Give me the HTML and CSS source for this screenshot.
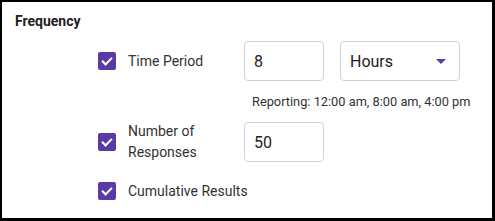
FILE: index.html
```html
<!DOCTYPE html>
<html>

<head>
    <meta charset="utf-8">
    <title>Frequency</title>
    <link rel="stylesheet" href="styles.css">
</head>

<body>
    <div class="panel">
        <h2 class="panel-title">Frequency</h2>

        <div class="options">
            <div class="option-row">
                <span class="check"></span>
                <span class="option-label">Time Period</span>
                <div class="field">8</div>
                <div class="dropdown">
                    <span>Hours</span>
                    <span class="caret"></span>
                </div>
            </div>
            <div class="hint">Reporting: 12:00 am, 8:00 am, 4:00 pm</div>

            <div class="option-row tall">
                <span class="check"></span>
                <span class="option-label">Number of<br>Responses</span>
                <div class="field">50</div>
            </div>

            <div class="option-row">
                <span class="check"></span>
                <span class="option-label wide">Cumulative Results</span>
            </div>
        </div>
    </div>
</body>

</html>
```

FILE: styles.css
```css
body {
    margin: 0;
    font-family: Roboto, "Liberation Sans", sans-serif;
    color: #333;
}

.panel {
    width: 477px;
    height: 207px;
    border-style: solid;
    border-color: #000;
    border-width: 2px 3px 3px 2px;
    background: #fff;
    padding: 9px 0 0 13px;
}

.panel-title {
    margin: 0;
    font-size: 14px;
    font-weight: bold;
    line-height: 20px;
    color: #222;
}

.options {
    margin-top: 10px;
    padding-left: 83px;
}

.option-row {
    display: flex;
    align-items: center;
    height: 40px;
}

.option-row.tall {
    height: 42px;
    margin-top: 11px;
}

.option-row + .option-row {
    margin-top: 8px;
}

.check {
    width: 18px;
    height: 18px;
    border-radius: 2px;
    background: #5b3aa5;
    position: relative;
    flex-shrink: 0;
}

.check::after {
    content: "";
    position: absolute;
    left: 6px;
    top: 3px;
    width: 4px;
    height: 8px;
    border: solid #fff;
    border-width: 0 2px 2px 0;
    transform: rotate(45deg);
}

.option-label {
    margin-left: 12px;
    width: 116px;
    font-size: 14px;
    line-height: 21px;
}

.option-label.wide {
    width: auto;
}

.field,
.dropdown {
    height: 40px;
    box-sizing: border-box;
    border: 1px solid #d2d2d2;
    border-radius: 4px;
    font-size: 16px;
    display: flex;
    align-items: center;
    padding-left: 9px;
    color: #222;
}

.field {
    width: 80px;
}

.dropdown {
    width: 120px;
    margin-left: 16px;
    justify-content: space-between;
    padding-right: 13px;
}

.caret {
    width: 0;
    height: 0;
    border-left: 5px solid transparent;
    border-right: 5px solid transparent;
    border-top: 5px solid #5b3aa5;
}

.hint {
    margin: 12px 0 0 154px;
    font-size: 12.8px;
    line-height: 17px;
    color: #333;
}
```
